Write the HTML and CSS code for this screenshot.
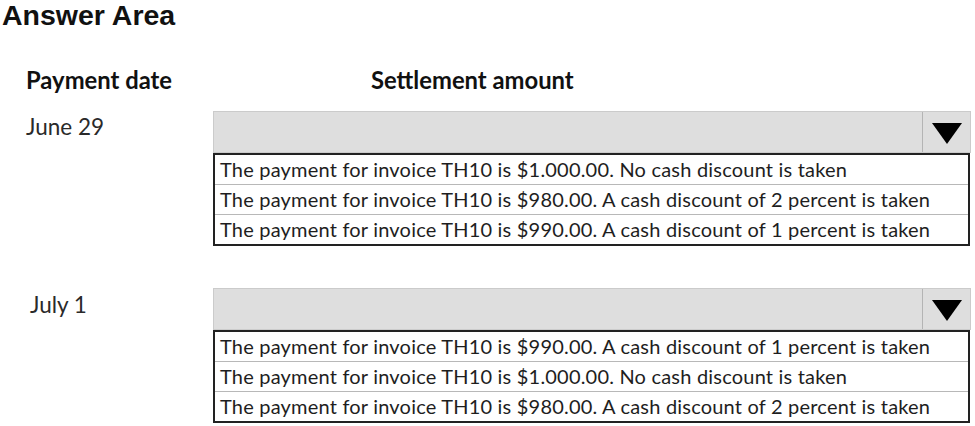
FILE: index.html
```html
<!DOCTYPE html>
<html lang="en">
<head>
  <meta charset="UTF-8">
  <title>Answer Area</title>
  <link rel="stylesheet" href="styles.css">
</head>
<body>

<h1 class="title">Answer Area</h1>

<div class="answer-grid">
  <div class="col-head">Payment date</div>
  <div class="col-head settle">Settlement amount</div>

  <div class="date">June 29</div>
  <div class="select-block">
    <div class="select-box">
      <span class="arrow-cell">
        <svg width="30" height="21" viewBox="0 0 30 21"><polygon points="0,0 30,0 15,21" fill="#000"/></svg>
      </span>
    </div>
    <ul class="options">
      <li>The payment for invoice TH10 is $1.000.00. No cash discount is taken</li>
      <li>The payment for invoice TH10 is $980.00. A cash discount of 2 percent is taken</li>
      <li>The payment for invoice TH10 is $990.00. A cash discount of 1 percent is taken</li>
    </ul>
  </div>

  <div class="date second">July 1</div>
  <div class="select-block second">
    <div class="select-box">
      <span class="arrow-cell">
        <svg width="30" height="21" viewBox="0 0 30 21"><polygon points="0,0 30,0 15,21" fill="#000"/></svg>
      </span>
    </div>
    <ul class="options">
      <li>The payment for invoice TH10 is $990.00. A cash discount of 1 percent is taken</li>
      <li>The payment for invoice TH10 is $1.000.00. No cash discount is taken</li>
      <li>The payment for invoice TH10 is $980.00. A cash discount of 2 percent is taken</li>
    </ul>
  </div>
</div>

</body>
</html>
```

FILE: styles.css
```css
body {
  margin: 0;
  background: #ffffff;
  font-family: Lato, "Open Sans", sans-serif;
  color: #1e1e1e;
}
.title {
  margin: 0;
  padding: 1px 0 0 2px;
  font-family: "Liberation Sans", Arial, sans-serif;
  font-size: 28.5px;
  font-weight: bold;
  line-height: 28px;
  color: #111;
}
.answer-grid {
  display: grid;
  grid-template-columns: 213px 760px;
  margin-top: 39px;
}
.col-head {
  font-size: 23.8px;
  font-weight: bold;
  line-height: 24px;
  padding-left: 26px;
  color: #111;
}
.col-head.settle {
  padding-left: 158px;
}
.date {
  font-size: 22.5px;
  line-height: 24px;
  padding-left: 26px;
  padding-top: 4px;
  margin-top: 19px;
  color: #2a2a2a;
}
.date.second {
  padding-left: 30px;
  padding-top: 5px;
}
.select-block {
  margin-top: 19px;
}
.select-block.second,
.date.second {
  margin-top: 42px;
}
.select-box {
  height: 40px;
  margin-right: 2px;
  background: #dedede;
  border: 1px solid #cbcbcb;
  display: flex;
  justify-content: flex-end;
}
.arrow-cell {
  width: 47px;
  border-left: 1px solid #b4b4b4;
  display: flex;
  justify-content: center;
  padding-top: 11px;
}
.options {
  list-style: none;
  margin: 0 3px 0 0;
  padding: 0;
  border: 2px solid #222;
}
.options li {
  height: 29px;
  line-height: 29px;
  padding-left: 5px;
  font-size: 20px;
  letter-spacing: 0.2px;
  border-top: 1px solid #b8b8b8;
}
.options li:first-child {
  border-top: none;
}
```
